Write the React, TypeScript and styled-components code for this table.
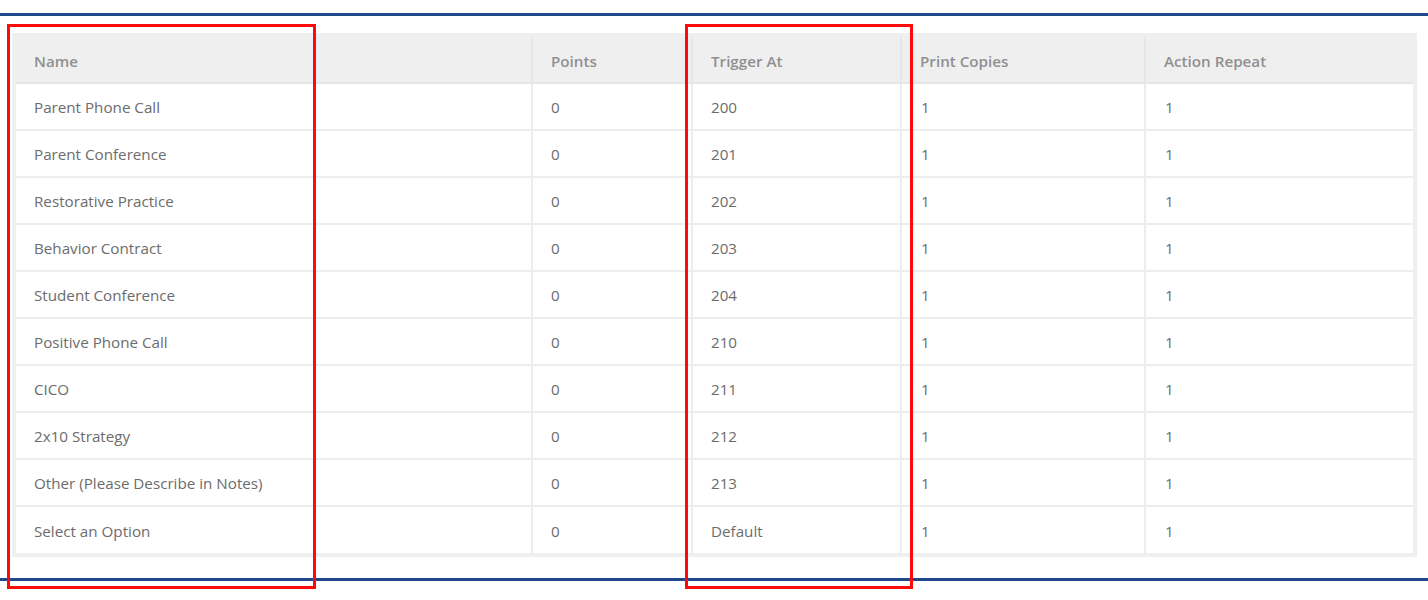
import React from "react"
import styled, { createGlobalStyle } from "styled-components"

const GlobalStyle = createGlobalStyle`
    html, body {
        margin: 0;
        padding: 0;
        background: #fff;
    }
    body {
        font-family: "Open Sans", "Liberation Sans", Arial, sans-serif;
    }
`

const rows = [
    { name: "Parent Phone Call", points: "0", trigger: "200", copies: "1", repeat: "1" },
    { name: "Parent Conference", points: "0", trigger: "201", copies: "1", repeat: "1" },
    { name: "Restorative Practice", points: "0", trigger: "202", copies: "1", repeat: "1" },
    { name: "Behavior Contract", points: "0", trigger: "203", copies: "1", repeat: "1" },
    { name: "Student Conference", points: "0", trigger: "204", copies: "1", repeat: "1" },
    { name: "Positive Phone Call", points: "0", trigger: "210", copies: "1", repeat: "1" },
    { name: "CICO", points: "0", trigger: "211", copies: "1", repeat: "1" },
    { name: "2x10 Strategy", points: "0", trigger: "212", copies: "1", repeat: "1" },
    { name: "Other (Please Describe in Notes)", points: "0", trigger: "213", copies: "1", repeat: "1" },
    { name: "Select an Option", points: "0", trigger: "Default", copies: "1", repeat: "1" },
]

const columns = [
    { label: "Name", width: 516 },
    { label: "Points", width: 160 },
    { label: "Trigger At", width: 209 },
    { label: "Print Copies", width: 244 },
    { label: "Action Repeat", width: 268 },
]

const ActionsTable = () => {
    return (
        <Page>
            <GlobalStyle />
            <Rule />
            <TableWrap>
                <Table>
                    <colgroup>
                        {columns.map(c => <col key={c.label} style={{ width: c.width }} />)}
                    </colgroup>
                    <thead>
                        <tr>
                            {columns.map(c => <Th key={c.label}>{c.label}</Th>)}
                        </tr>
                    </thead>
                    <tbody>
                        {rows.map(r => (
                            <tr key={r.name}>
                                <Td>{r.name}</Td>
                                <Td>{r.points}</Td>
                                <Td>{r.trigger}</Td>
                                <Td $num>{r.copies}</Td>
                                <Td $num>{r.repeat}</Td>
                            </tr>
                        ))}
                    </tbody>
                </Table>
            </TableWrap>
            <Rule $bottom />
            <Highlight $left={7} $width={309} />
            <Highlight $left={685} $width={228} />
        </Page>
    )
}

const Page = styled.div`
    position: relative;
    width: 1428px;
    height: 600px;
    padding-top: 13px;
    box-sizing: border-box;
    overflow: hidden;
`

const Rule = styled.div<{ $bottom?: boolean }>`
    height: 3px;
    background: #20488a;
    margin-top: ${p => p.$bottom ? "21px" : "0"};
`

const TableWrap = styled.div`
    margin: 17px 0 0 12px;
    width: 1405px;
    border: 4px solid #efefef;
    box-sizing: border-box;
    background: #fff;
`

const Table = styled.table`
    width: 100%;
    table-layout: fixed;
    border-collapse: collapse;
    font-size: 15.2px;

    tbody tr:first-child td {
        border-top: none;
    }
`

const Th = styled.th`
    height: 46px;
    padding: 3px 18px 0;
    text-align: left;
    font-weight: 600;
    color: #8f8f8f;
    background: #efefef;
    border-left: 2px solid #e6e6e6;
    border-bottom: 2px solid #e6e6e6;
    box-sizing: border-box;

    &:first-child {
        border-left: none;
    }
`

const Td = styled.td<{ $num?: boolean }>`
    height: 47px;
    padding: 1px 18px 0 ${p => p.$num ? "19px" : "18px"};
    color: #6c6c6c;
    border-left: 2px solid #ededed;
    border-top: 2px solid #ededed;
    box-sizing: border-box;
    white-space: nowrap;

    &:first-child {
        border-left: none;
    }
`

const Highlight = styled.div<{ $left: number; $width: number }>`
    position: absolute;
    top: 24px;
    left: ${p => p.$left}px;
    width: ${p => p.$width}px;
    height: 565px;
    border: 3px solid #ff0a0a;
    box-sizing: border-box;
    pointer-events: none;
`

export default ActionsTable
